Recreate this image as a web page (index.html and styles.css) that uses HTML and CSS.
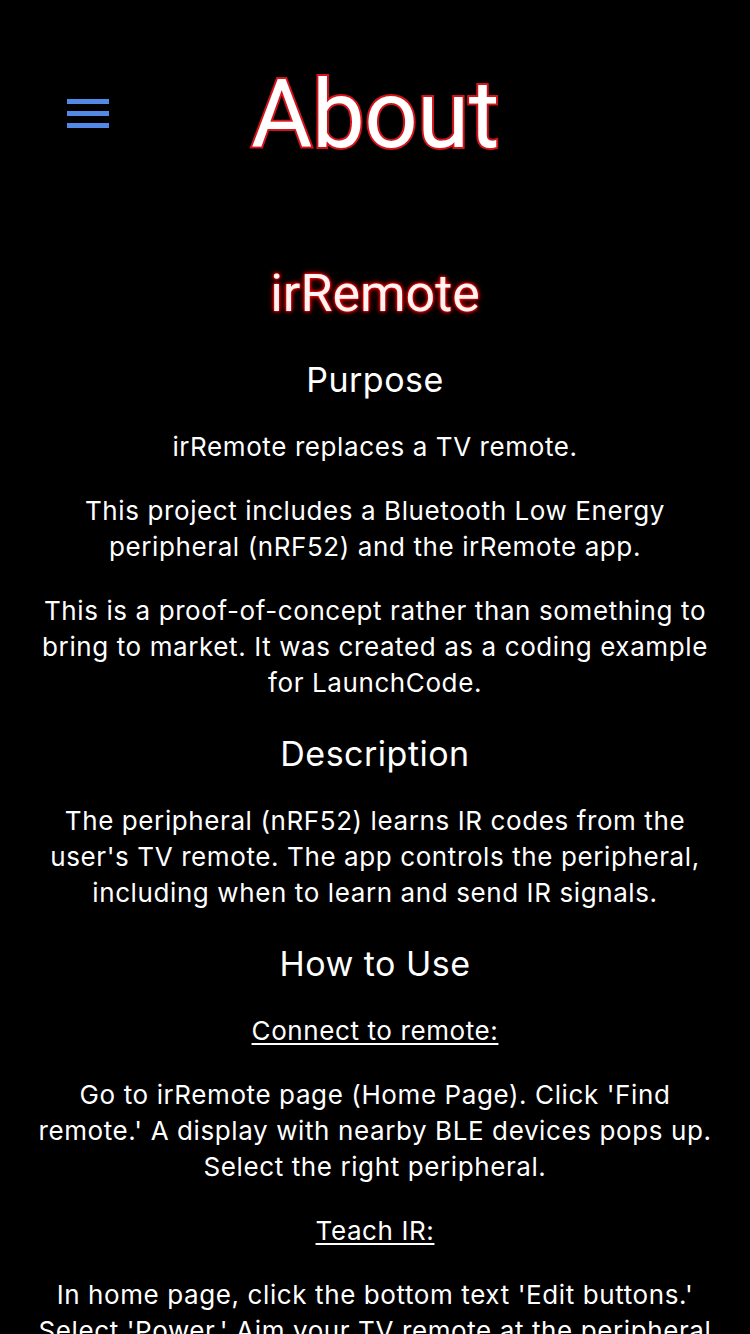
FILE: index.html
```html
<!DOCTYPE html>
<html lang="en">
<head>
<meta charset="utf-8">
<title>About</title>
<link rel="stylesheet" href="styles.css">
</head>
<body>
<header class="topbar">
  <button class="menu" aria-label="Menu">
    <span class="bar"></span><span class="bar"></span><span class="bar"></span>
  </button>
  <h1 class="title">About</h1>
  <div class="spacer"></div>
</header>
<main class="content">
  <h2 class="app-name">irRemote</h2>
  <h3 class="section first">Purpose</h3>
  <p>irRemote replaces a TV remote.</p>
  <p>This project includes a Bluetooth Low Energy peripheral (nRF52) and the irRemote app.</p>
  <p>This is a proof-of-concept rather than something to bring to market. It was created as a coding example for LaunchCode.</p>
  <h3 class="section">Description</h3>
  <p>The peripheral (nRF52) learns IR codes from the user's TV remote. The app controls the peripheral, including when to learn and send IR signals.</p>
  <h3 class="section">How to Use</h3>
  <p class="sub">Connect to remote:</p>
  <p>Go to irRemote page (Home Page). Click 'Find remote.' A display with nearby BLE devices pops up. Select the right peripheral.</p>
  <p class="sub">Teach IR:</p>
  <p>In home page, click the bottom text 'Edit buttons.' Select 'Power.' Aim your TV remote at the peripheral and press its power button.</p>
</main>
</body>
</html>
```
FILE: styles.css
```css
html, body {
  margin: 0;
  padding: 0;
  background: #000;
}
body {
  font-family: Roboto, "Liberation Sans", sans-serif;
  color: #fff;
  width: 750px;
  overflow: hidden;
}
.topbar {
  display: grid;
  grid-template-columns: 1fr auto 1fr;
  align-items: start;
  padding-top: 59px;
}
.menu {
  justify-self: start;
  margin: 40px 0 0 67px;
  padding: 0;
  border: 0;
  background: none;
  width: 42px;
  display: flex;
  flex-direction: column;
  gap: 7.5px;
}
.bar {
  display: block;
  width: 42px;
  height: 4.5px;
  background: #5288e6;
}
.title {
  margin: 0;
  font-weight: 400;
  font-size: 94px;
  line-height: 113px;
  color: #fff;
  -webkit-text-stroke: 4px #d4131b;
  paint-order: stroke fill;
  letter-spacing: -0.5px;
}
.content {
  display: flex;
  flex-direction: column;
  align-items: center;
  text-align: center;
  padding: 92px 34px 0;
  font-family: Inter, Roboto, sans-serif;
}
.app-name {
  margin: 0;
  font-family: Roboto, sans-serif;
  font-weight: 400;
  font-size: 52px;
  line-height: 60px;
  color: #fff4f4;
  text-shadow: 0 0 2px #ff1a1a, 0 0 3px #e00, 0 0 4px #c00, 0 0 6px #a00;
}
.section {
  margin: 37px 0 0;
  font-weight: 400;
  font-size: 34px;
  line-height: 40px;
  letter-spacing: 0.5px;
}
.section.first {
  margin-top: 36px;
}
p {
  margin: 28px 0 0;
  font-size: 26px;
  line-height: 36px;
  font-weight: 400;
  letter-spacing: 0.6px;
}
.section + p {
  margin-top: 29px;
}
p + .section {
  margin-top: 33px;
}
.sub {
  text-decoration: underline;
  text-underline-offset: 3px;
  text-decoration-thickness: 2px;
}
```
